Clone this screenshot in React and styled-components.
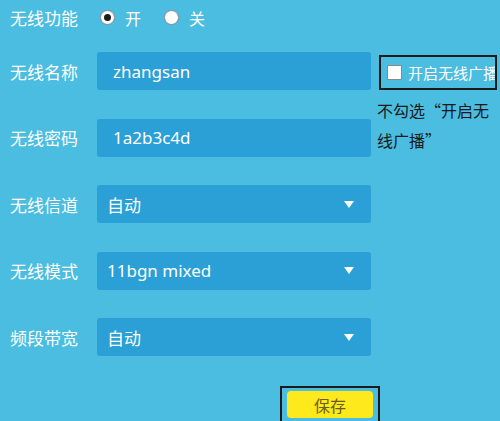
import React from "react";
import styled, { createGlobalStyle } from "styled-components";

const GlobalStyle = createGlobalStyle`
  html, body {
    margin: 0;
    padding: 0;
    background: #4abde0;
  }
  body {
    font-family: "Noto Sans", "Noto Sans CJK SC", sans-serif;
  }
`;

const Page = styled.div`
  width: 500px;
  height: 421px;
  overflow: hidden;
  background: #4abde0;
  padding: 0 0 0 10px;
  box-sizing: border-box;
  color: #fff;
`;

const RadioRow = styled.div`
  display: flex;
  align-items: center;
  height: 35px;
  padding-bottom: 17px;
`;

const Label = styled.div`
  width: 87px;
  font-size: 17px;
  color: #fff;
  font-family: "Noto Sans CJK SC", sans-serif;
`;

const RadioOption = styled.label`
  display: flex;
  align-items: center;
  gap: 10px;
  margin-left: 3px;
  margin-right: 20px;
  font-size: 16px;
  font-family: "Noto Sans CJK SC", sans-serif;
`;

const RadioCircle = styled.span`
  width: 15px;
  height: 15px;
  border-radius: 50%;
  background: #fff;
  border: 1px solid #8a8a8a;
  box-sizing: border-box;
  display: flex;
  align-items: center;
  justify-content: center;
  &::after {
    content: "";
    width: 7px;
    height: 7px;
    border-radius: 50%;
    background: ${p => (p.checked ? "#1e1e1e" : "transparent")};
  }
`;

const Form = styled.div`
  display: grid;
  grid-template-columns: 87px 274px 1fr;
  grid-auto-rows: 38px;
  row-gap: 28.5px;
  align-items: center;
`;

const Field = styled.div`
  height: 38px;
  background: #2aa0d6;
  border-radius: 3px;
  display: flex;
  align-items: center;
  justify-content: space-between;
  padding: 0 ${p => (p.select ? "17px" : "16px")} 0 ${p => (p.select ? "10px" : "16px")};
  box-sizing: border-box;
  font-size: 17px;
  color: #fff;
  font-family: "Noto Sans", "Noto Sans CJK SC", sans-serif;
`;

const Caret = styled.span`
  width: 0;
  height: 0;
  border-left: 5px solid transparent;
  border-right: 5px solid transparent;
  border-top: 7px solid #fff;
`;

const Side = styled.div`
  grid-row: span 2;
  align-self: start;
  margin-left: 6px;
  display: flex;
  flex-direction: column;
`;

const BroadcastBox = styled.div`
  margin-left: 2px;
  width: 118px;
  height: 35px;
  margin-top: 3px;
  border: 2px solid #1b1b1b;
  box-sizing: border-box;
  display: flex;
  align-items: center;
  gap: 6px;
  padding-left: 6px;
  white-space: nowrap;
  overflow: hidden;
  font-size: 15px;
  font-family: "Noto Sans CJK SC", sans-serif;
`;

const CheckSquare = styled.span`
  flex: none;
  width: 15px;
  height: 15px;
  background: #fff;
  border: 1px solid #8a8a8a;
  box-sizing: border-box;
`;

const Note = styled.div`
  width: 118px;
  margin-top: 5px;
  font-size: 16px;
  line-height: 30px;
  color: #1a1a1a;
  font-family: "Noto Sans CJK SC", sans-serif;
`;

const SaveRow = styled.div`
  display: flex;
  justify-content: flex-start;
  padding-left: 270px;
  margin-top: 30px;
`;

const SaveFrame = styled.div`
  width: 100px;
  height: 40px;
  border: 2px solid #1b1b1b;
  box-sizing: border-box;
  padding: 3px 5px;
`;

const SaveButton = styled.button`
  width: 86px;
  height: 27px;
  border: none;
  border-radius: 4px;
  background: #fde91c;
  color: #6b5d1d;
  font-size: 16px;
  font-family: "Noto Sans CJK SC", sans-serif;
  padding: 0;
`;

const selects = [
  { label: "无线信道", value: "自动" },
  { label: "无线模式", value: "11bgn mixed" },
  { label: "频段带宽", value: "自动" },
];

export default function App() {
  return (
    <Page>
      <GlobalStyle />
      <RadioRow>
        <Label>无线功能</Label>
        <RadioOption>
          <RadioCircle checked />
          开
        </RadioOption>
        <RadioOption>
          <RadioCircle />
          关
        </RadioOption>
      </RadioRow>
      <Form>
        <Label>无线名称</Label>
        <Field>zhangsan</Field>
        <Side>
          <BroadcastBox>
            <CheckSquare />
            开启无线广播
          </BroadcastBox>
          <Note>不勾选“开启无线广播”</Note>
        </Side>
        <Label>无线密码</Label>
        <Field>1a2b3c4d</Field>
        {selects.map(s => (
          <React.Fragment key={s.label}>
            <Label>{s.label}</Label>
            <Field select>
              {s.value}
              <Caret />
            </Field>
            <div />
          </React.Fragment>
        ))}
      </Form>
      <SaveRow>
        <SaveFrame>
          <SaveButton>保存</SaveButton>
        </SaveFrame>
      </SaveRow>
    </Page>
  );
}
